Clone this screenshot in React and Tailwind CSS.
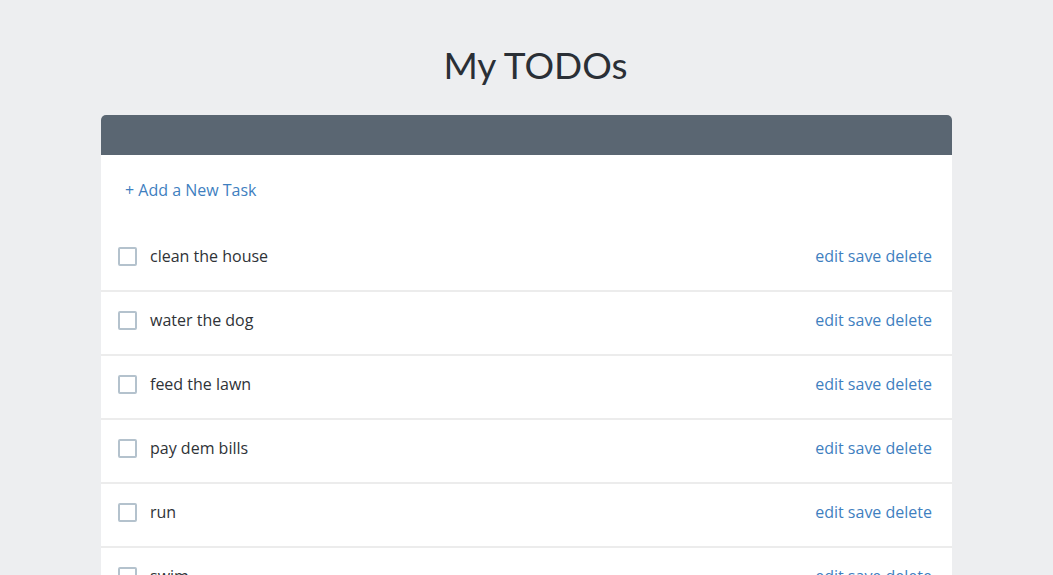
import React from "react";

const tasks = ["clean the house", "water the dog", "feed the lawn", "pay dem bills", "run", "swim"];

function App() {
  return (
    <div className="min-h-screen bg-[#edeef0] font-['Open_Sans','Noto_Sans',sans-serif] text-[#2f3337] overflow-hidden h-[575px]">
      <h1 className="pt-[40px] pl-[18px] text-center text-[37px] leading-[50px] text-[#2a2f36] font-['Lato','Noto_Sans',sans-serif]">
        My TODOs
      </h1>
      <div className="mx-auto mt-[25px] w-[851px] bg-white rounded-t-[5px] overflow-hidden">
        <div className="h-[40px] bg-[#5a6672]"></div>
        <div className="h-[73px] pb-[3px] flex items-center px-[24px]">
          <a href="#" className="text-[16px] text-[#3f7fbf]">+ Add a New Task</a>
        </div>
        <ul>
          {tasks.map((task) => (
            <li
              key={task}
              className="h-[64px] pb-[6px] flex items-center pl-[17px] pr-[20px] border-b-2 border-[#ececec]"
            >
              <span className="w-[19px] h-[19px] border-2 border-[#b4c2cd] rounded-[2px] mr-[13px]"></span>
              <span className="text-[16px] flex-1">{task}</span>
              <span className="text-[16px] text-[#3f7fbf]">edit save delete</span>
            </li>
          ))}
        </ul>
      </div>
    </div>
  );
}

export default App;
